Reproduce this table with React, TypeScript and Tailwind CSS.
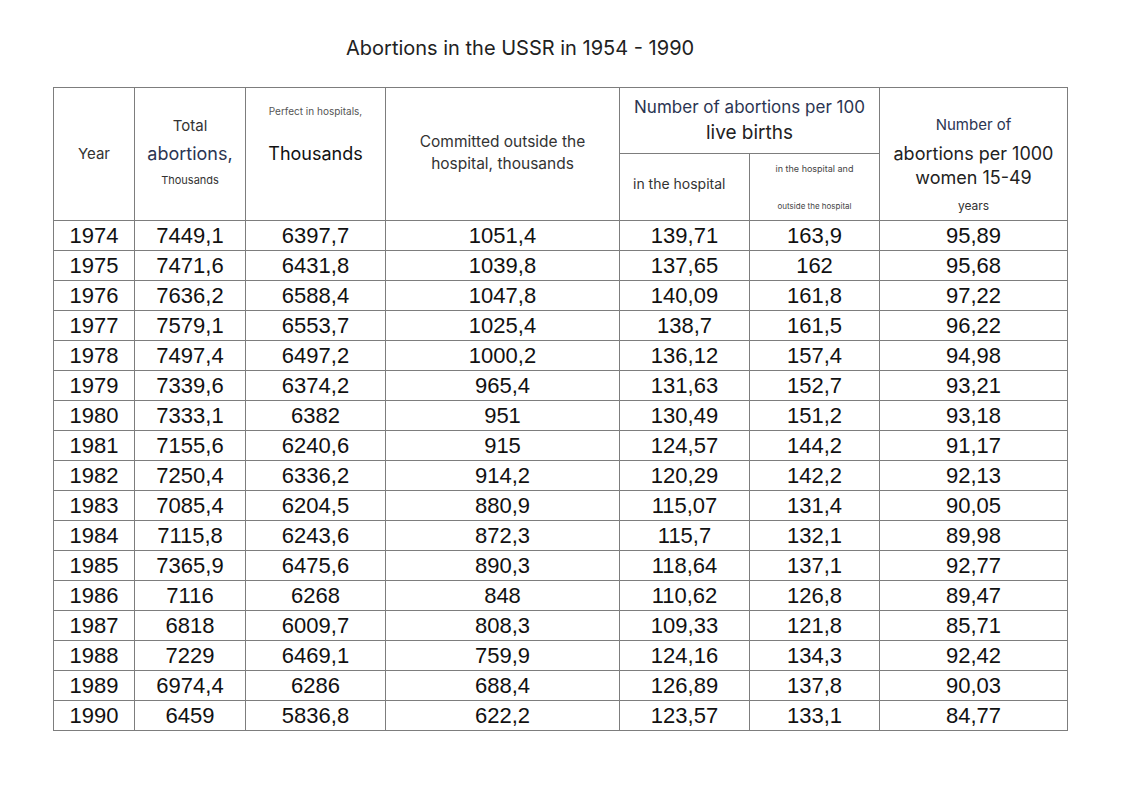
const rows: string[][] = [
  ["1974", "7449,1", "6397,7", "1051,4", "139,71", "163,9", "95,89"],
  ["1975", "7471,6", "6431,8", "1039,8", "137,65", "162", "95,68"],
  ["1976", "7636,2", "6588,4", "1047,8", "140,09", "161,8", "97,22"],
  ["1977", "7579,1", "6553,7", "1025,4", "138,7", "161,5", "96,22"],
  ["1978", "7497,4", "6497,2", "1000,2", "136,12", "157,4", "94,98"],
  ["1979", "7339,6", "6374,2", "965,4", "131,63", "152,7", "93,21"],
  ["1980", "7333,1", "6382", "951", "130,49", "151,2", "93,18"],
  ["1981", "7155,6", "6240,6", "915", "124,57", "144,2", "91,17"],
  ["1982", "7250,4", "6336,2", "914,2", "120,29", "142,2", "92,13"],
  ["1983", "7085,4", "6204,5", "880,9", "115,07", "131,4", "90,05"],
  ["1984", "7115,8", "6243,6", "872,3", "115,7", "132,1", "89,98"],
  ["1985", "7365,9", "6475,6", "890,3", "118,64", "137,1", "92,77"],
  ["1986", "7116", "6268", "848", "110,62", "126,8", "89,47"],
  ["1987", "6818", "6009,7", "808,3", "109,33", "121,8", "85,71"],
  ["1988", "7229", "6469,1", "759,9", "124,16", "134,3", "92,42"],
  ["1989", "6974,4", "6286", "688,4", "126,89", "137,8", "90,03"],
  ["1990", "6459", "5836,8", "622,2", "123,57", "133,1", "84,77"],
];

const cell = "border border-[#7d7d7d] p-0 font-normal";

export default function App() {
  return (
    <div className="w-[1140px] h-[793px] bg-white font-['Inter',sans-serif] text-[#333]">
      <div className="pt-[36px] pl-[346px] text-[20px] leading-[24px] text-[#222]">
        Abortions in the USSR in 1954 - 1990
      </div>

      <div className="pl-[53px] pt-[27px]">
        <table className="table-fixed border-collapse w-[1015px]">
          <colgroup>
            <col className="w-[81px]" />
            <col className="w-[111px]" />
            <col className="w-[140px]" />
            <col className="w-[234px]" />
            <col className="w-[130px]" />
            <col className="w-[130px]" />
            <col className="w-[188px]" />
          </colgroup>
          <thead>
            <tr className="h-[66px]">
              <th rowSpan={2} className={`${cell} align-middle text-[15px]`}>
                Year
              </th>
              <th rowSpan={2} className={`${cell} align-top`}>
                <div className="pt-[28px] text-[15px] leading-[20px]">Total</div>
                <div className="text-[18px] leading-[36px] text-[#2b3552]">abortions,</div>
                <div className="text-[11px] leading-[16px]">Thousands</div>
              </th>
              <th rowSpan={2} className={`${cell} align-top`}>
                <div className="pt-[15px] text-[10px] leading-[16px] text-[#555]">
                  Perfect in hospitals,
                </div>
                <div className="text-[18px] leading-[70px] text-[#111]">Thousands</div>
              </th>
              <th rowSpan={2} className={`${cell} align-top`}>
                <div className="pt-[43px] text-[15.5px] leading-[22px]">
                  Committed outside the
                  <br />
                  hospital, thousands
                </div>
              </th>
              <th colSpan={2} className={`${cell} align-top`}>
                <div className="pt-[8px] text-[17px] leading-[22px] text-[#2b3552]">
                  Number of abortions per 100
                </div>
                <div className="text-[19px] leading-[30px] text-[#222]">live births</div>
              </th>
              <th rowSpan={2} className={`${cell} align-top`}>
                <div className="pt-[27px] text-[15px] leading-[20px] text-[#2b3552]">
                  Number of
                </div>
                <div className="text-[18px] leading-[38px] text-[#222]">abortions per 1000</div>
                <div className="text-[18px] leading-[10px] text-[#222]">women 15-49</div>
                <div className="mt-[15px] text-[12px] leading-[16px]">years</div>
              </th>
            </tr>
            <tr className="h-[67px]">
              <th className={`${cell} align-top text-left`}>
                <div className="pt-[20px] pl-[13px] text-[14px] leading-[20px]">
                  in the hospital
                </div>
              </th>
              <th className={`${cell} align-top`}>
                <div className="pt-[8px] text-[9px] leading-[14px] text-[#444]">
                  in the hospital and
                </div>
                <div className="pt-[24px] text-[8px] leading-[12px] text-[#444]">
                  outside the hospital
                </div>
              </th>
            </tr>
          </thead>
          <tbody className="font-['Liberation_Sans',Arial,sans-serif] text-[22px] text-[#111]">
            {rows.map((r) => (
              <tr key={r[0]} className="h-[30px]">
                {r.map((v, i) => (
                  <td key={i} className={`${cell} text-center leading-[28px]`}>
                    {v}
                  </td>
                ))}
              </tr>
            ))}
          </tbody>
        </table>
      </div>
    </div>
  );
}
